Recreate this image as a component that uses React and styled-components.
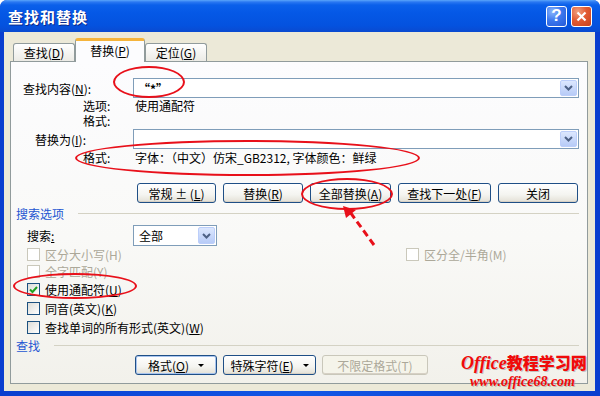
import React from "react"
import styled, { createGlobalStyle } from "styled-components"

const GlobalStyle = createGlobalStyle`
  html, body {
    margin: 0;
    padding: 0;
    background: #ffffff;
  }
  body {
    font-family: "Noto Sans CJK SC", "Noto Sans", sans-serif;
    font-size: 12px;
    color: #000;
  }
  * {
    box-sizing: border-box;
  }
`

const Window = styled.div`
  position: relative;
  width: 600px;
  height: 396px;
  display: flex;
  flex-direction: column;
  border-radius: 7px 7px 0 0;
  overflow: hidden;
  background: #0841d3;
`

const TitleBar = styled.div`
  height: 32px;
  display: flex;
  align-items: center;
  padding: 0 8px 0 8px;
  background: linear-gradient(
    180deg,
    #5aa6fb 0,
    #2a78f2 2px,
    #0a60ea 5px,
    #0558e6 40%,
    #0452df 80%,
    #0a4ad0 100%
  );
  .title {
    flex: 1;
    color: #fff;
    font-weight: 700;
    font-size: 15px;
    letter-spacing: 1px;
    text-shadow: 1px 1px 0 #0a2a8a;
  }
`

const CapButton = styled.div`
  width: 21px;
  height: 21px;
  margin-left: 4px;
  border: 1px solid #fff;
  border-radius: 3px;
  display: flex;
  align-items: center;
  justify-content: center;
  color: #fff;
  font-family: "Liberation Sans", sans-serif;
  font-weight: 700;
  font-size: 17px;
  background: ${(p) =>
    p.$close
      ? "radial-gradient(circle at 30% 25%, #f0a080 0%, #e25b33 45%, #c8411d 100%)"
      : "radial-gradient(circle at 30% 25%, #8ab6fc 0%, #3d78ee 45%, #2358d8 100%)"};
`

const Frame = styled.div`
  flex: 1;
  display: flex;
  padding: 0 5px 5px 4px;
  background: linear-gradient(90deg, #0a3ecf, #1257e6 50%, #0a3ecf);
`

const Body = styled.div`
  flex: 1;
  display: flex;
  flex-direction: column;
  background: #ece9d8;
  padding: 7px 7px 7px 6px;
`

const TabRow = styled.div`
  height: 22px;
  display: flex;
  align-items: flex-end;
  padding-left: 3px;
`

const Tab = styled.div`
  position: relative;
  z-index: ${(p) => (p.$active ? 2 : 1)};
  width: ${(p) => p.$width}px;
  height: ${(p) => (p.$active ? 24 : 18)}px;
  margin-bottom: ${(p) => (p.$active ? -1 : 0)}px;
  display: flex;
  align-items: center;
  justify-content: center;
  border: 1px solid #919b9c;
  border-bottom: none;
  border-top: ${(p) => (p.$active ? "3px solid #f5b43c" : "1px solid #919b9c")};
  border-radius: 3px 3px 0 0;
  background: ${(p) =>
    p.$active ? "#fcfcfe" : "linear-gradient(180deg, #ffffff, #ecebe6)"};
  padding-bottom: ${(p) => (p.$active ? 2 : 0)}px;
`

const Panel = styled.div`
  position: relative;
  z-index: 0;
  flex: 1;
  display: flex;
  flex-direction: column;
  border: 1px solid #919b9c;
  background: linear-gradient(180deg, #fcfcfe 0%, #f9f9f7 55%, #f2f1eb 100%);
`

const K = styled.span`
  text-decoration: underline;
`

const FieldRow = styled.div`
  margin-top: ${(p) => p.$top}px;
  height: 20px;
  display: grid;
  grid-template-columns: 122px 1fr;
  align-items: center;
  padding-right: 8px;
`

const FieldLabel = styled.div`
  padding-left: ${(p) => p.$indent}px;
  white-space: nowrap;
`

const Combo = styled.div`
  height: ${(p) => p.$h || 20}px;
  width: ${(p) => (p.$w ? p.$w + "px" : "auto")};
  display: flex;
  align-items: center;
  border: 1px solid #7f9db9;
  background: #fff;
  padding: 1px;
`

const ComboText = styled.div`
  flex: 1;
  padding-left: ${(p) => p.$pad || 3}px;
  white-space: nowrap;
  font-weight: ${(p) => (p.$bold ? 700 : 400)};
`

const DropButton = styled.div`
  width: 17px;
  height: 100%;
  display: flex;
  align-items: center;
  justify-content: center;
  border: 1px solid #bccefa;
  border-radius: 2px;
  background: linear-gradient(180deg, #dce7fe, #b7cbf7);
`

const Chevron = () => (
  <svg width="9" height="6" viewBox="0 0 9 6">
    <path d="M1 1 L4.5 4.5 L8 1" stroke="#4d6185" strokeWidth="2" fill="none" />
  </svg>
)

const OptionBlock = styled.div`
  margin-top: ${(p) => p.$top}px;
  margin-left: 72px;
  display: grid;
  grid-template-columns: 52px 1fr;
  line-height: ${(p) => p.$lh}px;
  white-space: nowrap;
`

const ButtonRow = styled.div`
  margin-top: ${(p) => p.$top}px;
  height: 20px;
  display: flex;
  gap: ${(p) => p.$gap}px;
  padding-left: ${(p) => p.$left}px;
`

const Button = styled.div`
  width: ${(p) => p.$w}px;
  height: 100%;
  display: flex;
  align-items: center;
  justify-content: center;
  white-space: nowrap;
  border: 1px solid ${(p) => (p.$disabled ? "#c9c7ba" : "#1f4f86")};
  border-radius: 3px;
  color: ${(p) => (p.$disabled ? "#aca899" : "#000")};
  background: ${(p) =>
    p.$disabled
      ? "#f5f4ea"
      : "linear-gradient(180deg, #ffffff 0%, #f4f4f0 60%, #e3e0d6 100%)"};
  box-shadow: ${(p) =>
    p.$focus ? "inset 0 0 0 1px #a8c4ee" : "inset 0 -1px 0 #d6d0c5"};
`

const Caret = styled.span`
  display: inline-block;
  margin-left: 9px;
  border-left: 3px solid transparent;
  border-right: 3px solid transparent;
  border-top: 3px solid #000;
`

const Section = styled.div`
  margin-top: ${(p) => p.$top}px;
  height: 14px;
  display: flex;
  align-items: center;
  padding: 0 8px 0 5px;
  color: #2456d2;
  &::after {
    content: "";
    flex: 1;
    height: 1px;
    margin-left: 14px;
    background: #d4d2c4;
  }
`

const SearchRow = styled.div`
  margin-top: 5px;
  height: 21px;
  display: flex;
  align-items: center;
  padding-left: 16px;
  .label {
    width: 106px;
  }
`

const CheckRow = styled.div`
  height: ${(p) => p.$h}px;
  display: grid;
  grid-template-columns: 379px 1fr;
  align-items: center;
  padding-left: 16px;
`

const CheckItem = styled.div`
  display: flex;
  align-items: center;
  gap: 5px;
  white-space: nowrap;
  color: ${(p) => (p.$disabled ? "#aca899" : "#000")};
`

const Box = styled.span`
  width: 13px;
  height: 13px;
  display: flex;
  align-items: center;
  justify-content: center;
  border: 1px solid ${(p) => (p.$disabled ? "#cac8bb" : "#1c5180")};
  background: ${(p) =>
    p.$disabled ? "#fff" : "linear-gradient(135deg, #dcdcd7, #ffffff)"};
`

const Check = ({ checked, disabled, children }) => (
  <CheckItem $disabled={disabled}>
    <Box $disabled={disabled}>
      {checked && (
        <svg width="9" height="9" viewBox="0 0 9 9">
          <path d="M1 4.5 L3.5 7 L8 2" stroke="#21a121" strokeWidth="2" fill="none" />
        </svg>
      )}
    </Box>
    {children}
  </CheckItem>
)

const Ellipse = styled.div`
  position: absolute;
  left: ${(p) => p.$x}px;
  top: ${(p) => p.$y}px;
  width: ${(p) => p.$w}px;
  height: ${(p) => p.$h}px;
  border: 2.5px solid #e8101a;
  border-radius: 50%;
  pointer-events: none;
`

const Arrow = styled.svg`
  position: absolute;
  left: 330px;
  top: 198px;
`

const Watermark = styled.div`
  position: absolute;
  left: 461px;
  top: 354px;
  color: #f00a0a;
  font-style: italic;
  font-weight: 700;
  line-height: 1;
  text-shadow: 1px 1px 0 rgba(160, 160, 160, 0.6);
  .brand {
    font-size: 18px;
    font-family: "Liberation Serif", "Noto Sans CJK SC", serif;
  }
  .brand b {
    font-family: "Noto Sans CJK SC", sans-serif;
    font-size: 16px;
    font-style: normal;
  }
  .url {
    margin: 3px 0 0 9px;
    font-size: 14px;
    font-family: "Liberation Serif", serif;
  }
`

export default function App() {
  return (
    <>
      <GlobalStyle />
      <Window>
        <TitleBar>
          <span className="title">查找和替换</span>
          <CapButton>?</CapButton>
          <CapButton $close>
            <svg width="11" height="11" viewBox="0 0 11 11">
              <path d="M1.5 1.5 L9.5 9.5 M9.5 1.5 L1.5 9.5" stroke="#fff" strokeWidth="2.2" />
            </svg>
          </CapButton>
        </TitleBar>
        <Frame>
          <Body>
            <TabRow>
              <Tab $width={62}>
                查找(<K>D</K>)
              </Tab>
              <Tab $width={70} $active>
                替换(<K>P</K>)
              </Tab>
              <Tab $width={62}>
                定位(<K>G</K>)
              </Tab>
            </TabRow>
            <Panel>
              <FieldRow $top={16}>
                <FieldLabel $indent={12}>
                  查找内容(<K>N</K>):
                </FieldLabel>
                <Combo>
                  <ComboText $bold>“*”</ComboText>
                  <DropButton>
                    <Chevron />
                  </DropButton>
                </Combo>
              </FieldRow>
              <OptionBlock $top={0} $lh={15}>
                <span>选项:</span>
                <span>使用通配符</span>
                <span>格式:</span>
                <span />
              </OptionBlock>
              <FieldRow $top={1}>
                <FieldLabel $indent={24}>
                  替换为(<K>I</K>):
                </FieldLabel>
                <Combo>
                  <ComboText />
                  <DropButton>
                    <Chevron />
                  </DropButton>
                </Combo>
              </FieldRow>
              <OptionBlock $top={1} $lh={15}>
                <span>格式:</span>
                <span>字体：（中文）仿宋_GB2312, 字体颜色：鲜绿</span>
              </OptionBlock>
              <ButtonRow $top={18} $gap={7} $left={126}>
                <Button $w={79}>
                  常规 ± (<K>L</K>)
                </Button>
                <Button $w={80}>
                  替换(<K>R</K>)
                </Button>
                <Button $w={81}>
                  全部替换(<K>A</K>)
                </Button>
                <Button $w={93}>
                  查找下一处(<K>F</K>)
                </Button>
                <Button $w={80}>关闭</Button>
              </ButtonRow>
              <Section $top={3}>搜索选项</Section>
              <SearchRow>
                <span className="label">
                  搜索<K>:</K>
                </span>
                <Combo $w={84} $h={21}>
                  <ComboText $pad={4}>全部</ComboText>
                  <DropButton>
                    <Chevron />
                  </DropButton>
                </Combo>
              </SearchRow>
              <CheckRow $h={17}>
                <Check disabled>区分大小写(H)</Check>
                <Check disabled>区分全/半角(M)</Check>
              </CheckRow>
              <CheckRow $h={17}>
                <Check disabled>全字匹配(Y)</Check>
              </CheckRow>
              <CheckRow $h={19}>
                <Check checked>
                  <span>
                    使用通配符(<K>U</K>)
                  </span>
                </Check>
              </CheckRow>
              <CheckRow $h={19}>
                <Check>
                  <span>
                    同音(英文)(<K>K</K>)
                  </span>
                </Check>
              </CheckRow>
              <CheckRow $h={19}>
                <Check>
                  <span>
                    查找单词的所有形式(英文)(<K>W</K>)
                  </span>
                </Check>
              </CheckRow>
              <Section $top={1}>查找</Section>
              <ButtonRow $top={3} $gap={6} $left={124}>
                <Button $w={82} $focus>
                  格式(<K>O</K>)
                  <Caret />
                </Button>
                <Button $w={93}>
                  特殊字符(<K>E</K>)
                  <Caret />
                </Button>
                <Button $w={106} $disabled>
                  不限定格式(T)
                </Button>
              </ButtonRow>
            </Panel>
          </Body>
        </Frame>

        <Ellipse $x={113} $y={66} $w={72} $h={32} />
        <Ellipse $x={75} $y={140} $w={345} $h={36} />
        <Ellipse $x={301} $y={178} $w={92} $h={32} />
        <Ellipse $x={13} $y={273} $w={124} $h={26} />
        <Arrow width="60" height="56" viewBox="0 0 60 56">
          <path d="M44 47 L20 14" stroke="#e8101a" strokeWidth="3" strokeDasharray="7 4" fill="none" />
          <path d="M13 8 L26 12 L16 20 Z" fill="#e8101a" />
        </Arrow>
        <Watermark>
          <div className="brand">
            Office<b>教程学习网</b>
          </div>
          <div className="url">www.office68.com</div>
        </Watermark>
      </Window>
    </>
  )
}
